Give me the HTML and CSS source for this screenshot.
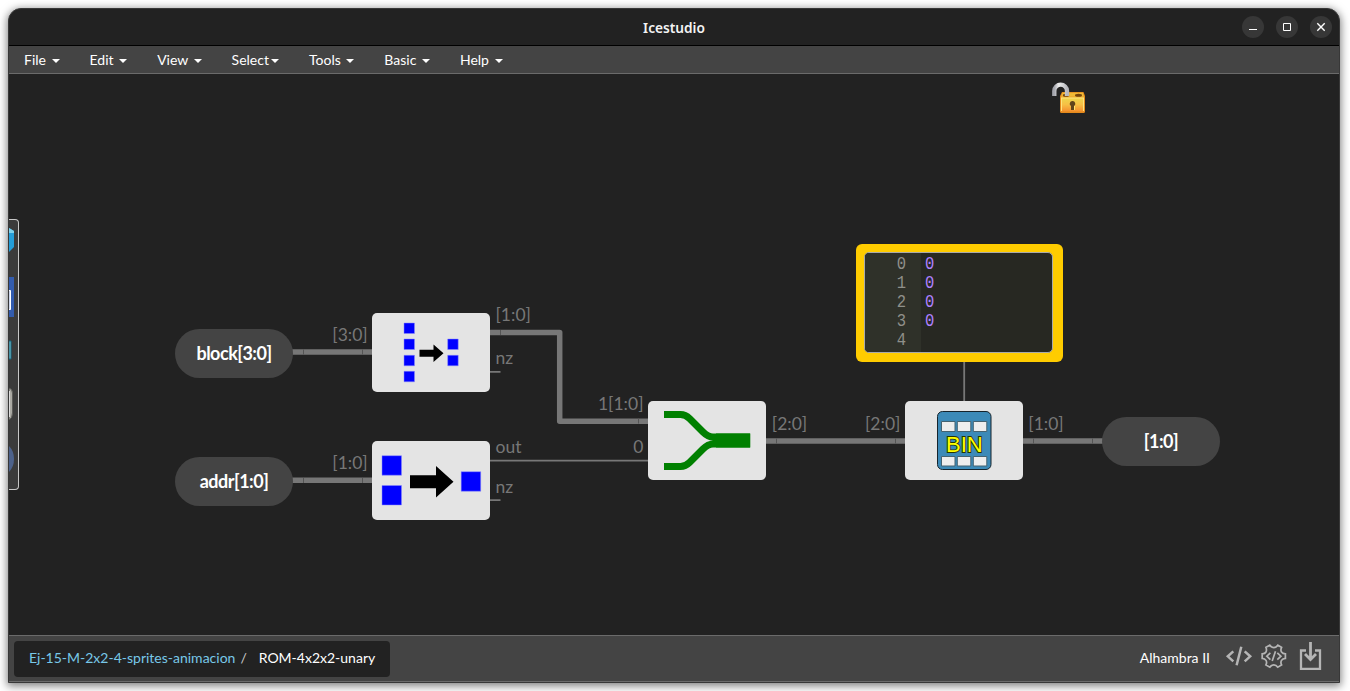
FILE: index.html
```html
<!DOCTYPE html>
<html lang="en">
<head>
<meta charset="utf-8">
<title>Icestudio</title>
<link rel="stylesheet" href="styles.css">
</head>
<body>
<div class="window">
  <header class="titlebar">
    <span class="title">Icestudio</span>
    <div class="controls">
      <span class="control"><svg width="22" height="22"><path d="M7 13.5h8" stroke="#fff"/></svg></span>
      <span class="control"><svg width="22" height="22"><path d="M7.5 7.5h7v7h-7z" fill="none" stroke="#fff"/></svg></span>
      <span class="control"><svg width="22" height="22"><path d="M7.3 7.3l7.4 7.4M14.7 7.3l-7.4 7.4" stroke="#fff" stroke-width="1.4"/></svg></span>
    </div>
  </header>
  <nav class="menubar">
    <span class="menu">File <i class="caret"></i></span>
    <span class="menu">Edit <i class="caret"></i></span>
    <span class="menu">View <i class="caret"></i></span>
    <span class="menu">Select<i class="caret"></i></span>
    <span class="menu">Tools <i class="caret"></i></span>
    <span class="menu">Basic <i class="caret"></i></span>
    <span class="menu">Help <i class="caret"></i></span>
  </nav>
  <main class="canvas">
    <svg class="wires" width="1330" height="561" viewBox="9 74 1330 561">
      <g class="bus">
        <path d="M292 352H374"/>
        <path d="M292 480.300H374"/>
        <path d="M489 332.400H559.700V421.200H650"/>
        <path d="M765 440.900H907"/>
        <path d="M1022 440.900H1104"/>
      </g>
      <g class="wire">
        <path d="M490 371.900H500.500M490 500.200H500.500M490 460.600H650M964.200 360V402"/>
      </g>
      <path class="tick" d="M303.500 349.500v5M362.500 349.500v5M303.500 478v5M362.500 478v5M500.500 330v5M638.500 418.500v5M776.500 438.500v5M895.500 438.500v5M1033.500 438.500v5M1092.500 438.500v5"/>
      <g class="port">
        <text x="332.300" y="341">[3:0]</text>
        <text x="332.300" y="469">[1:0]</text>
        <text x="495.500" y="321">[1:0]</text>
        <text x="495.500" y="364">nz</text>
        <text x="495.500" y="453">out</text>
        <text x="495.500" y="493">nz</text>
        <text x="643.500" y="410" text-anchor="end">1[1:0]</text>
        <text x="643.500" y="453" text-anchor="end">0</text>
        <text x="771.800" y="430">[2:0]</text>
        <text x="865" y="430">[2:0]</text>
        <text x="1028.300" y="430">[1:0]</text>
      </g>
    </svg>

    <div class="pin pin-block">block[3:0]</div>
    <div class="pin pin-addr">addr[1:0]</div>
    <div class="pin pin-out">[1:0]</div>

    <div class="block block-encoder4">
      <svg width="118" height="79" viewBox="372 313 118 79">
        <path fill="#00f" stroke="#8a8aff" stroke-width=".5" d="M404 323h10.500v10.500H404zM404 339h10.500v10.500H404zM404 355.300h10.500v10.500H404zM404 371.300h10.500v10.500H404zM447.700 339h10.500v10.500h-10.500zM447.700 355.300h10.500v10.500h-10.500z"/>
        <path d="M419.500 349.700h14v-5.200l10 8.700-10 8.700v-5.200h-14z"/>
      </svg>
    </div>
    <div class="block block-encoder2">
      <svg width="118" height="79" viewBox="372 441 118 79">
        <path fill="#00f" stroke="#8a8aff" stroke-width=".5" d="M382 455.700h19.500v19.500H382zM382 485.500h19.500v19.500H382zM461.200 471.700h19.500v19.500h-19.500z"/>
        <path d="M410 475.300h26v-9.300l17.500 15.700L436 497.500v-9.300h-26z"/>
      </svg>
    </div>
    <div class="block block-join">
      <svg width="118" height="79" viewBox="648 401 118 79">
        <path fill="none" stroke="#008000" stroke-width="7" d="M664 414.500H680.500Q685.500 414.500 689.500 418.500L703 432Q708 437 713 437H750M664 466.500H680.500Q685.500 466.500 689.500 462.500L703 449Q708 444 713 444H750"/>
        <path fill="#008000" d="M716 433.500h34.300v14H716z"/>
      </svg>
    </div>
    <div class="block block-rom">
      <svg width="118" height="79" viewBox="905 401 118 79">
        <rect x="937.500" y="411.500" width="53.500" height="58" rx="5" fill="#3c8ab8" stroke="#16242c"/>
        <path fill="#eee" stroke="#456371" d="M941.500 421.500h13.500v10h-13.500zM957.300 421.500h13.500v10h-13.500zM973.300 421.500h13.500v10h-13.500zM941.500 456.500h13.500v9.500h-13.500zM957.300 456.500h13.500v9.500h-13.500zM973.300 456.500h13.500v9.500h-13.500z"/>
        <text class="bin" x="964.300" y="451.500" text-anchor="middle">BIN</text>
      </svg>
    </div>

    <section class="memory">
      <div class="editor">
        <div class="gutter"><span>0</span><span>1</span><span>2</span><span>3</span><span>4</span></div>
        <div class="code"><span>0</span><span>0</span><span>0</span><span>0</span></div>
      </div>
    </section>

    <svg class="lock" width="36" height="34" viewBox="1051 81 36 34">
      <defs>
        <linearGradient id="gold" x2="0" y2="1"><stop offset="0" stop-color="#ecd84c"/><stop offset=".5" stop-color="#f7c045"/><stop offset="1" stop-color="#f48f2d"/></linearGradient>
        <linearGradient id="steel"><stop offset="0" stop-color="#a5a6ad"/><stop offset=".35" stop-color="#eee"/><stop offset="1" stop-color="#b7b8bd"/></linearGradient>
      </defs>
      <path d="M1062 92h21.500l1.500 4v15.500q0 1.500-1.500 1.500h-22q-1.500 0-1.500-1.500V96z" fill="#e48a1c"/>
      <path d="M1062.500 92.700h20.500l1 4h-23z" fill="#efb935"/>
      <ellipse cx="1066" cy="95.200" rx="3.200" ry="1.500" fill="#74430b"/><ellipse cx="1078.500" cy="95.200" rx="3.500" ry="1.500" fill="#74430b"/>
      <path d="M1061 97.500h23v14h-23z" fill="url(#gold)"/>
      <path d="M1061 98h23M1061.500 98v13M1083.500 98v13" stroke="#ffe27c" fill="none"/>
      <path d="M1054.300 96v-5a6.300 6.300 0 0 1 12.700 0V96" fill="none" stroke="url(#steel)" stroke-width="4.300"/>
      <path d="M1072.500 101a2.700 2.700 0 0 1 1.500 5v4h-3v-4a2.700 2.700 0 0 1 1.500-5z" fill="#60441b"/>
      <path d="M1074.500 106v4" stroke="#ffe56e"/>
    </svg>

    <aside class="dock">
      <svg width="9" height="269" viewBox="9 220 9 269">
        <path d="M9 228l5 3v16l-5 5z" fill="#249ed9"/><path d="M9 228l5 3v2H9z" fill="#7dd2ed"/>
        <path d="M9 277h5v40H9z" fill="#335cae"/><path d="M9 290.500h1.500v19H9" fill="#cdd6ea" stroke="#fff"/>
        <path d="M9 341h2v18H9z" fill="#7cc5cf" stroke="#176681"/>
        <path d="M9 388q3.500 1 3.500 5v20q0 5-3.500 7z" fill="#aaa9a3" stroke="#5a5a57"/><path d="M9.500 391v26" stroke="#ddd"/>
        <path d="M9 446q5 5 5 13t-5 13z" fill="#4d628b"/>
      </svg>
    </aside>
  </main>
  <footer class="footer">
    <div class="breadcrumb"><span class="parent">Ej-15-M-2x2-4-sprites-animacion</span><span class="slash">/</span><span>ROM-4x2x2-unary</span></div>
    <div class="status">
      <span class="board">Alhambra II</span>
      <svg class="icons" width="98" height="32" viewBox="1225 641 98 32" fill="none" stroke="#b5b5b5">
        <path d="M1233.300 651.300l-5.500 5 5.500 5M1244.700 651.300l5.500 5-5.500 5M1241.300 646.800l-4.700 18.500" stroke-width="2.500"/>
        <path d="M1269.800 645.200Q1271.500 647.600 1273.800 647.600T1277.800 645.200L1281.600 647.300Q1280.300 650.200 1281.500 652T1285.400 653.800V658.400Q1282.700 658.500 1281.500 660.400T1281.600 664.900L1277.800 667.200Q1276.200 664.800 1273.800 664.800T1269.800 667.200L1265.900 664.900Q1267.200 662.300 1266 660.400T1262.200 658.400V653.800Q1265 653.800 1266 652T1265.900 647.300Z" stroke-width="1.700"/>
        <path d="M1270.400 652.800l-3.600 3.400 3.600 3.400M1277.300 652.800l3.600 3.400-3.600 3.400M1275.500 651.300l-3.300 9.800" stroke-width="1.700"/>
        <path d="M1306 650.500h-5v18.300h19v-18.300h-5" stroke-width="2.300"/>
        <path d="M1310.500 642v16.500M1305 654l5.500 5.500 5.500-5.500" stroke-width="2.800"/>
      </svg>
    </div>
  </footer>
</div>
</body>
</html>
```
FILE: styles.css
```css
* { box-sizing: border-box; }
html, body { height: 100%; }
body {
  margin: 0;
  padding: 8px 10px 8px 8px;
  background: #fff;
  overflow: hidden;
  font-family: Lato, sans-serif;
  font-size: 14px;
  color: #fff;
}
.window {
  width: 1332px;
  height: 675px;
  display: flex;
  flex-direction: column;
  overflow: hidden;
  border: 1px solid #383838;
  border-radius: 13px 13px 0 0;
  background: #222;
  box-shadow: 0 2px 8px 1px rgba(0, 0, 0, .5);
}
.titlebar {
  height: 37px;
  flex: none;
  display: grid;
  grid-template-columns: 1fr auto 1fr;
  align-items: center;
  border-bottom: 1px solid #000;
}
.title {
  grid-column: 2;
  font: 600 13.700px "Noto Sans", sans-serif;
  color: #f4f4f4;
}
.controls {
  display: flex;
  justify-content: flex-end;
  gap: 12px;
  padding-right: 7px;
}
.control {
  width: 22px;
  height: 22px;
  border-radius: 50%;
  background: #373737;
}
.control svg, .lock, .wires, .block svg, .dock svg, .icons { display: block; }
.menubar {
  height: 28px;
  flex: none;
  display: flex;
  background: #444;
  border-bottom: 1px solid #6b6b6b;
}
.menu {
  padding: 0 15px;
  line-height: 28px;
  white-space: pre;
}
.caret {
  display: inline-block;
  margin-left: 2px;
  vertical-align: middle;
  border-top: 4px solid #fff;
  border-left: 4px solid transparent;
  border-right: 4px solid transparent;
}
.canvas {
  position: relative;
  height: 561px;
  flex: none;
}
.bus { fill: none; stroke: #777; stroke-width: 5.500px; stroke-linejoin: round; }
.wire { fill: none; stroke: #777; stroke-width: 1.800px; }
.tick { stroke: #555; stroke-width: 1px; }
.port { fill: #777; font-size: 17.500px; }
.pin {
  position: absolute;
  width: 118px;
  height: 49px;
  border-radius: 25px;
  background: #444;
  text-align: center;
  line-height: 49px;
  font-size: 18px;
  font-weight: bold;
  letter-spacing: -.5px;
}
.pin-block { left: 166px; top: 255px; }
.pin-addr { left: 166px; top: 383px; }
.pin-out { left: 1093px; top: 343px; }
.block {
  position: absolute;
  width: 118px;
  height: 79px;
  border-radius: 5px;
  background: #e4e4e4;
}
.block-encoder4 { left: 363px; top: 239px; }
.block-encoder2 { left: 363px; top: 367px; }
.block-join { left: 639px; top: 327px; }
.block-rom { left: 896px; top: 327px; }
.bin {
  font: 22px "Liberation Sans", sans-serif;
  fill: #ff0;
  stroke: #263400;
  stroke-width: 1.800px;
  paint-order: stroke;
}
.memory {
  position: absolute;
  left: 847px;
  top: 170px;
  width: 207px;
  height: 118px;
  padding: 8px 10px 9px 8px;
  border-radius: 6px;
  background: #fc0;
}
.editor {
  height: 101px;
  display: flex;
  overflow: hidden;
  border: 1px solid #aaa;
  border-radius: 5px;
  background: #272822;
  font: 15.500px/19px "Liberation Mono", monospace;
}
.gutter {
  width: 56px;
  padding: 2px 15px 0 0;
  background: #2f3129;
  color: #8f908a;
  text-align: right;
}
.code { padding: 2px 0 0 4px; color: #ae81ff; }
.gutter span, .code span { display: block; transform: scaleY(1.15); }
.lock { position: absolute; left: 1042px; top: 7px; }
.dock {
  position: absolute;
  left: 0;
  top: 145px;
  width: 10px;
  height: 271px;
  overflow: hidden;
  border: 1px solid #c8c8c8;
  border-left: 0;
  border-radius: 0 4px 4px 0;
  background: #3b3b3b;
}
.footer {
  flex: 1;
  display: flex;
  justify-content: space-between;
  align-items: flex-start;
  padding: 5px 16px 0 5px;
  border-top: 1px solid #6b6b6b;
  border-bottom: 1px solid #6b6b6b;
  background: #444;
}
.breadcrumb {
  width: 376px;
  height: 36px;
  padding-left: 15px;
  display: flex;
  border-radius: 4px;
  background: #222;
  line-height: 34px;
  white-space: nowrap;
}
.parent { color: #78c8e8; }
.slash { padding: 0 12px 0 5px; color: #ccc; }
.status { display: flex; gap: 15px; }
.board { line-height: 34px; }
```
